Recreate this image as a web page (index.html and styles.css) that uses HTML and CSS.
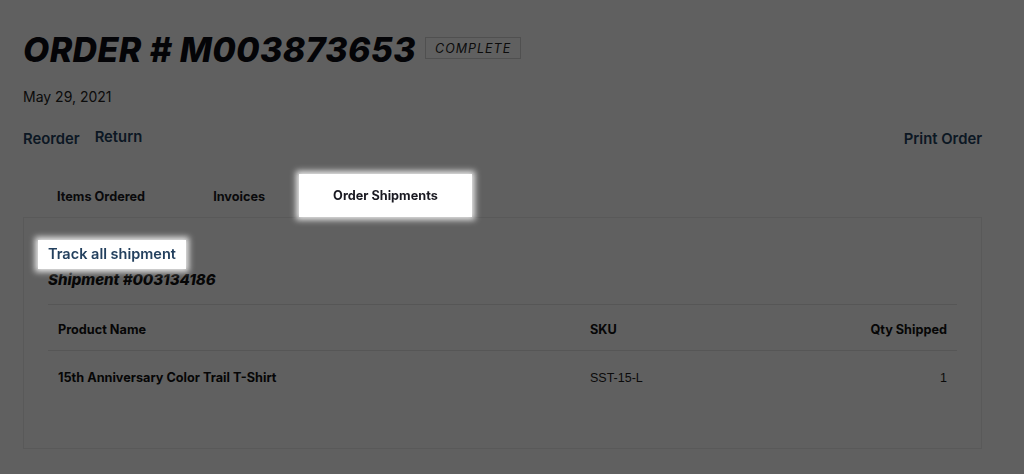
FILE: index.html
```html
<!DOCTYPE html>
<html lang="en">
<head>
<meta charset="utf-8">
<title>Order # M003873653</title>
<link rel="stylesheet" href="styles.css">
</head>
<body>
<div class="page">
  <div class="title-row">
    <h1 class="title">ORDER # M003873653</h1>
    <span class="status">COMPLETE</span>
  </div>
  <div class="date">May 29, 2021</div>
  <div class="actions">
    <div class="actions-left">
      <a class="action reorder" href="#">Reorder</a>
      <a class="action return" href="#">Return</a>
    </div>
    <a class="action" href="#">Print Order</a>
  </div>
  <div class="tabs">
    <div class="tab">Items Ordered</div>
    <div class="tab">Invoices</div>
    <div class="tab tab-active spot">Order Shipments</div>
  </div>
  <div class="panel">
    <div class="track-row"><a class="track spot" href="#">Track all shipment</a></div>
    <div class="shipment-title">Shipment #003134186</div>
    <table class="items">
      <colgroup>
        <col class="col-name">
        <col class="col-sku">
        <col class="col-qty">
      </colgroup>
      <thead>
        <tr><th>Product Name</th><th>SKU</th><th class="c-qty">Qty Shipped</th></tr>
      </thead>
      <tbody>
        <tr><td>15th Anniversary Color Trail T-Shirt</td><td class="plain">SST-15-L</td><td class="c-qty plain">1</td></tr>
      </tbody>
    </table>
  </div>
</div>
<div class="overlay"></div>
</body>
</html>
```

FILE: styles.css
```css
html, body {
  margin: 0;
  padding: 0;
  background: #ffffff;
}
body {
  font-family: "Inter", "Liberation Sans", sans-serif;
  color: #111;
}
.page {
  padding: 30px 42px 0 23px;
}
.title-row {
  display: flex;
  align-items: center;
  gap: 9px;
}
.title {
  margin: 0;
  font-size: 34px;
  line-height: 40px;
  font-weight: 800;
  font-style: italic;
  letter-spacing: 0.35px;
  color: #0d0d14;
}
.status {
  border: 1px solid #d4d4d4;
  padding: 2px 9px 1px;
  font-size: 12.5px;
  line-height: 17px;
  font-style: italic;
  letter-spacing: 1px;
  color: #222;
  margin-top: -4px;
}
.date {
  margin-top: 18px;
  font-size: 14px;
  line-height: 18px;
  color: #222;
}
.actions {
  display: flex;
  justify-content: space-between;
  align-items: center;
  margin-top: 24px;
}
.actions-left {
  display: flex;
  gap: 15px;
}
.action {
  font-size: 14.8px;
  font-weight: 600;
  color: #22405e;
  text-decoration: none;
}
.return {
  position: relative;
  top: -2px;
}
.tabs {
  display: flex;
  margin-top: 27px;
  height: 42px;
}
.tab {
  padding: 0 34px;
  display: flex;
  align-items: center;
  font-size: 12.7px;
  font-weight: 700;
  color: #1a1a22;
}
.tab-active {
  height: 43px;
  margin-top: -1px;
}
.panel {
  border: 1px solid #ececec;
  padding: 0 24px 43px;
}
.track-row {
  padding-top: 22px;
  display: flex;
}
.track {
  margin-left: -10px;
  padding: 5px 10px 6px;
  font-size: 14.5px;
  font-weight: 600;
  color: #23405e;
  text-decoration: none;
  line-height: 18px;
}
.shipment-title {
  margin-top: 1px;
  font-size: 15px;
  line-height: 20px;
  font-weight: 800;
  font-style: italic;
  color: #111;
  padding-bottom: 14px;
  border-bottom: 1px solid #e4e4e4;
}
.items {
  width: 100%;
  border-collapse: collapse;
  table-layout: fixed;
}
.col-name { width: 532px; }
.col-qty { width: 160px; }
.items th, .items td {
  padding: 0 10px;
  font-size: 12.7px;
  text-align: left;
  color: #111;
}
.items th {
  height: 45px;
  padding-top: 5px;
  box-sizing: border-box;
  font-weight: 700;
  border-bottom: 1px solid #e4e4e4;
}
.items td {
  height: 54px;
  font-weight: 700;
}
.items .c-qty { text-align: right; }
.items td.plain {
  font-family: "Liberation Sans", sans-serif;
  font-weight: 400;
  font-size: 12.5px;
  color: #1c1c1c;
}
.overlay {
  position: fixed;
  inset: 0;
  background: rgba(0, 0, 0, 0.625);
  z-index: 10;
}
.spot {
  position: relative;
  z-index: 11;
  background: #ffffff;
  box-shadow: 0 0 6px 3px rgba(255, 255, 255, 0.85);
}
```
